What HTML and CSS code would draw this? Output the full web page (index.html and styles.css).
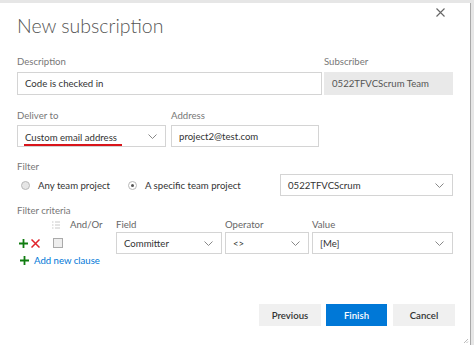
FILE: index.html
```html
<!DOCTYPE html>
<html lang="en">
<head>
    <meta charset="UTF-8">
    <title>New subscription</title>
    <link rel="stylesheet" href="styles.css">
</head>
<body>
    <div class="dialog">
        <svg class="close" width="9" height="9" viewBox="0 0 9 9"><path d="M0.5 0.5L8.5 8.5M8.5 0.5L0.5 8.5" stroke="#666" stroke-width="1.1"/></svg>
        <h1 class="title">New subscription</h1>

        <div class="form">
            <div class="row row-top">
                <div class="field">
                    <div class="label">Description</div>
                    <div class="input tall">Code is checked in</div>
                </div>
                <div class="field">
                    <div class="label">Subscriber</div>
                    <div class="input tall readonly">0522TFVCScrum Team</div>
                </div>
            </div>

            <div class="row row-deliver">
                <div class="field">
                    <div class="label">Deliver to</div>
                    <div class="input select"><span class="marked">Custom email address</span><svg class="chev" width="9" height="5" viewBox="0 0 9 5"><polyline points="0.5,0.5 4.5,4.5 8.5,0.5" fill="none" stroke="#888"/></svg></div>
                </div>
                <div class="field">
                    <div class="label">Address</div>
                    <div class="input">project2@test.com</div>
                </div>
            </div>

            <div class="label section">Filter</div>
            <div class="radios">
                <span class="radio"></span><span class="radio-text">Any team project</span>
                <span class="radio on"></span><span class="radio-text">A specific team project</span>
                <div class="input select project">0522TFVCScrum<svg class="chev" width="9" height="5" viewBox="0 0 9 5"><polyline points="0.5,0.5 4.5,4.5 8.5,0.5" fill="none" stroke="#888"/></svg></div>
            </div>

            <div class="label section criteria-label">Filter criteria</div>
            <div class="criteria">
                <span></span>
                <svg class="list-icon" width="8" height="8" viewBox="0 0 8 8"><path d="M0 1h1.5M3 1h5M0 4h1.5M3 4h5M0 7h1.5M3 7h5" stroke="#c8c8c8"/></svg>
                <span class="col-head">And/Or</span>
                <span class="col-head">Field</span>
                <span class="col-head">Operator</span>
                <span class="col-head">Value</span>

                <span class="row-actions">
                    <svg width="9" height="9" viewBox="0 0 9 9"><path d="M4.5 0v9M0 4.5h9" stroke="#107c10" stroke-width="1.8"/></svg>
                    <svg width="9" height="9" viewBox="0 0 9 9"><path d="M0.5 0.5L8.5 8.5M8.5 0.5L0.5 8.5" stroke="#e0242b" stroke-width="1.5"/></svg>
                </span>
                <span class="checkbox"></span>
                <span></span>
                <div class="input select">Committer<svg class="chev" width="9" height="5" viewBox="0 0 9 5"><polyline points="0.5,0.5 4.5,4.5 8.5,0.5" fill="none" stroke="#888"/></svg></div>
                <div class="input select">&lt;&gt;<svg class="chev" width="9" height="5" viewBox="0 0 9 5"><polyline points="0.5,0.5 4.5,4.5 8.5,0.5" fill="none" stroke="#888"/></svg></div>
                <div class="input select">[Me]<svg class="chev" width="9" height="5" viewBox="0 0 9 5"><polyline points="0.5,0.5 4.5,4.5 8.5,0.5" fill="none" stroke="#888"/></svg></div>
            </div>

            <div class="add-clause">
                <svg width="9" height="9" viewBox="0 0 9 9"><path d="M4.5 0v9M0 4.5h9" stroke="#107c10" stroke-width="1.8"/></svg>
                <span>Add new clause</span>
            </div>
        </div>

        <div class="footer">
            <button class="btn">Previous</button>
            <button class="btn primary">Finish</button>
            <button class="btn">Cancel</button>
        </div>

        <svg class="grip" width="6" height="6" viewBox="0 0 6 6"><path d="M5 1L1 5M5 3.5L3.5 5" stroke="#bbb"/></svg>
    </div>
</body>
</html>
```

FILE: styles.css
```css
body {
    margin: 0;
    background-color: #e6e6e6;
    font-family: "Segoe UI", Lato, sans-serif;
    font-size: 9.6px;
    color: #333;
    height: 345px;
    overflow: hidden;
}
.dialog {
    position: relative;
    margin-top: 3px;
    width: 471px;
    height: 342px;
    background-color: #fff;
    border-right: 1px solid #a8a8a8;
    box-sizing: border-box;
    display: flex;
    flex-direction: column;
}
.close {
    position: absolute;
    top: 5px;
    right: 25px;
}
.title {
    margin: 10px 0 0 17px;
    font-size: 19.5px;
    line-height: 26px;
    font-weight: 300;
    color: #555;
}
.form {
    padding: 0 17px;
    margin-top: 16px;
}
.row {
    display: grid;
}
.row-top {
    grid-template-columns: 305px 129px;
    column-gap: 2px;
}
.row-deliver {
    margin-top: 14px;
    grid-template-columns: 149px 148px;
    column-gap: 5px;
}
.label {
    line-height: 14px;
    color: #777;
    margin-bottom: 3px;
}
.row-deliver .label {
    margin-bottom: 2px;
}
.input {
    height: 22px;
    border: 1px solid #d4d4d4;
    box-sizing: border-box;
    padding: 0 7px;
    display: flex;
    align-items: center;
    color: #333;
    white-space: nowrap;
}
.input.tall {
    height: 23px;
}
.input.readonly {
    background-color: #e9e9e9;
    border-color: #e9e9e9;
    color: #555;
}
.select {
    justify-content: space-between;
    padding-right: 8px;
}
.chev {
    flex-shrink: 0;
}
.marked {
    display: inline-block;
    line-height: 13px;
    padding: 2px 5px 0 1px;
    margin: 3px 0 0 -1px;
    border-bottom: 2px solid #d9141a;
}
.section {
    margin-top: 13px;
    margin-bottom: 0;
}
.radios {
    display: flex;
    align-items: center;
    height: 22px;
}
.radio {
    width: 7px;
    height: 7px;
    border: 1px solid #b8b8b8;
    border-radius: 50%;
    background-color: #e6e6e6;
    margin: 0 8px 0 4px;
    box-sizing: content-box;
    position: relative;
}
.radio.on {
    background-color: #fff;
    margin-left: 4px;
}
.radio.on::after {
    content: "";
    position: absolute;
    left: 2px;
    top: 2px;
    width: 3px;
    height: 3px;
    border-radius: 50%;
    background-color: #555;
}
.radio-text {
    margin-right: 14px;
    color: #333;
}
.project {
    margin-left: auto;
    width: 173px;
}
.criteria-label {
    margin-top: 8px;
}
.criteria {
    display: grid;
    grid-template-columns: 30px 17px 43px 106px 84px 141px;
    grid-template-rows: 14px 22px;
    column-gap: 3px;
    align-items: center;
}
.col-head {
    color: #666;
    line-height: 14px;
}
.list-icon {
    margin-left: 2px;
}
.row-actions {
    display: flex;
    align-items: center;
    gap: 3px;
    padding-left: 2px;
}
.checkbox {
    width: 8px;
    height: 8px;
    border: 1px solid #aaa;
    background-color: #eee;
    margin-left: 3px;
}
.add-clause {
    display: flex;
    align-items: center;
    gap: 5px;
    margin-top: 0;
    height: 13px;
    padding-left: 3px;
    color: #0078d7;
}
.footer {
    margin-top: auto;
    display: flex;
    justify-content: flex-end;
    gap: 5px;
    padding: 0 15px 19px 0;
}
.btn {
    height: 22px;
    border: none;
    background-color: #f0f0f0;
    font-family: "Segoe UI", Lato, sans-serif;
    font-size: 9.6px;
    font-weight: 600;
    color: #333;
    width: 62px;
    padding: 0;
}
.btn.primary {
    background-color: #0078d7;
    color: #fff;
    width: 61px;
    margin-right: 1px;
}
.grip {
    position: absolute;
    right: 1px;
    bottom: 1px;
}
```
